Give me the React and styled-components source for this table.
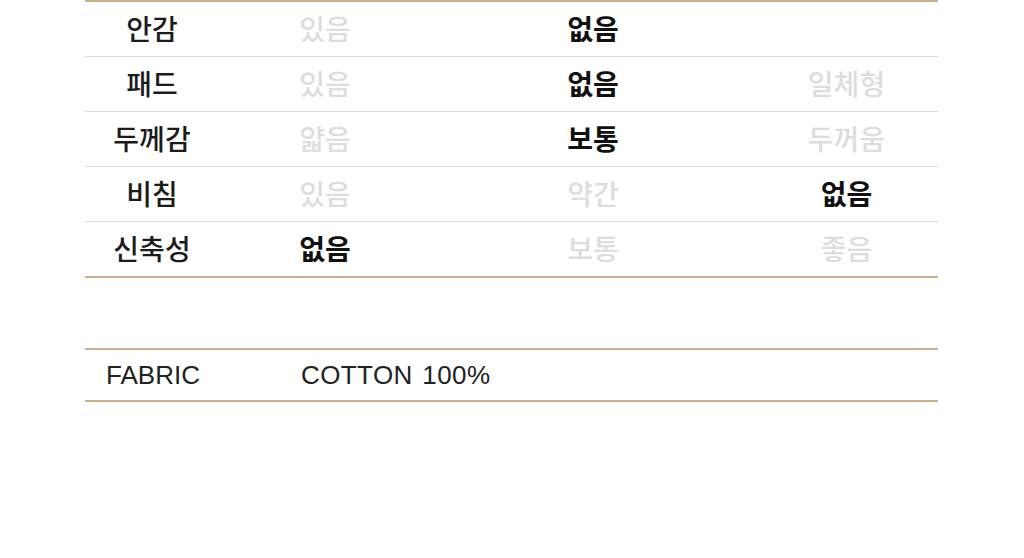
import React from 'react';
import styled, { createGlobalStyle } from 'styled-components';

const GlobalStyle = createGlobalStyle`
  html, body {
    margin: 0;
    padding: 0;
    background: #fff;
  }
  body {
    font-family: "Noto Sans CJK KR", "Liberation Sans", sans-serif;
  }
`;

const Page = styled.div`
  width: 853px;
  margin-left: 85px;
`;

const SpecTable = styled.div`
  border-top: 2px solid #cbb08f;
  border-bottom: 2px solid #cbb08f;
`;

const SpecRow = styled.div`
  display: grid;
  grid-template-columns: 134px 212px 324px 183px;
  height: 55px;
  align-items: center;
  line-height: 1;
  padding-bottom: 3px;
  box-sizing: border-box;
  border-bottom: 1px solid #dcdcdc;

  &:last-child {
    border-bottom: none;
    height: 54px;
  }
`;

const Label = styled.div`
  text-align: center;
  font-size: 28px;
  font-weight: 500;
  color: #1b1b1b;
`;

const Value = styled.div`
  text-align: center;
  font-size: 28px;
  font-weight: ${props => (props.active ? 700 : 500)};
  color: ${props => (props.active ? '#111' : '#dddddd')};
`;

const FabricTable = styled.div`
  margin-top: 70px;
  border-top: 2px solid #cbb08f;
  border-bottom: 2px solid #cbb08f;
`;

const FabricRow = styled.div`
  display: grid;
  grid-template-columns: 195px 1fr;
  align-items: center;
  height: 50px;
  padding-left: 21px;
  font-family: "Liberation Sans", Arial, sans-serif;
  font-size: 26px;
  color: #222;
`;

const FabricValue = styled.span`
  letter-spacing: 0.4px;
  word-spacing: 2px;
`;

const rows = [
  { label: '안감', values: ['있음', '없음', ''], active: 1 },
  { label: '패드', values: ['있음', '없음', '일체형'], active: 1 },
  { label: '두께감', values: ['얇음', '보통', '두꺼움'], active: 1 },
  { label: '비침', values: ['있음', '약간', '없음'], active: 2 },
  { label: '신축성', values: ['없음', '보통', '좋음'], active: 0 },
];

const App = () => (
  <>
    <GlobalStyle />
    <Page>
      <SpecTable>
        {rows.map(row => (
          <SpecRow key={row.label}>
            <Label>{row.label}</Label>
            {row.values.map((v, i) => (
              <Value key={i} active={i === row.active}>{v}</Value>
            ))}
          </SpecRow>
        ))}
      </SpecTable>
      <FabricTable>
        <FabricRow>
          <span>FABRIC</span>
          <FabricValue>COTTON 100%</FabricValue>
        </FabricRow>
      </FabricTable>
    </Page>
  </>
);

export default App;
